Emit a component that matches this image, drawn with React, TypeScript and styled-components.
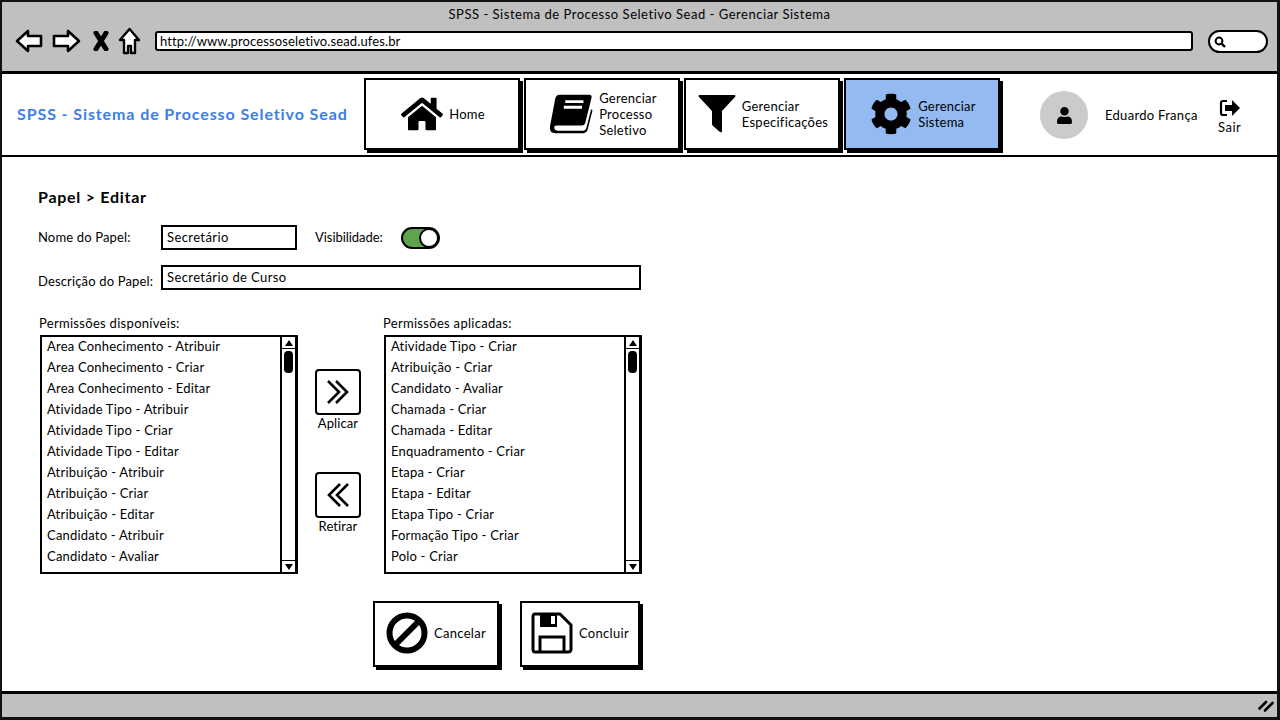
import React from 'react';
import styled, { createGlobalStyle } from 'styled-components';
import { FaHome, FaCog, FaUser } from 'react-icons/fa';

const available = [
    'Area Conhecimento - Atribuir',
    'Area Conhecimento - Criar',
    'Area Conhecimento - Editar',
    'Atividade Tipo - Atribuir',
    'Atividade Tipo - Criar',
    'Atividade Tipo - Editar',
    'Atribuição - Atribuir',
    'Atribuição - Criar',
    'Atribuição - Editar',
    'Candidato - Atribuir',
    'Candidato - Avaliar',
];

const applied = [
    'Atividade Tipo - Criar',
    'Atribuição - Criar',
    'Candidato - Avaliar',
    'Chamada - Criar',
    'Chamada - Editar',
    'Enquadramento - Criar',
    'Etapa - Criar',
    'Etapa - Editar',
    'Etapa Tipo - Criar',
    'Formação Tipo - Criar',
    'Polo - Criar',
];

const PermissionList = ({ title, items }: { title: string; items: string[] }) => (
    <ListColumn>
        <ListTitle>{title}</ListTitle>
        <ListBox>
            <ListItems>
                {items.map((item) => (
                    <ListItem key={item}>{item}</ListItem>
                ))}
            </ListItems>
            <ScrollBar>
                <ScrollArrow>
                    <svg width="8" height="6" viewBox="0 0 8 6">
                        <path d="M4 0 8 6H0z" fill="#000" />
                    </svg>
                </ScrollArrow>
                <ScrollThumb />
                <ScrollArrow $bottom>
                    <svg width="8" height="6" viewBox="0 0 8 6">
                        <path d="M0 0H8L4 6z" fill="#000" />
                    </svg>
                </ScrollArrow>
            </ScrollBar>
        </ListBox>
    </ListColumn>
);

const App = () => {
    return (
        <Window>
            <GlobalStyle />
            <BrowserBar>
                <BrowserTitle>SPSS - Sistema de Processo Seletivo Sead - Gerenciar Sistema</BrowserTitle>
                <BrowserRow>
                    <BrowserIcons>
                        <svg width="28" height="24" viewBox="0 0 28 24">
                            <path d="M2 12 13 2V7H26V17H13V22Z" fill="#fff" stroke="#000" strokeWidth="2.6" strokeLinejoin="round" />
                        </svg>
                        <svg width="29" height="24" viewBox="0 0 29 24">
                            <path d="M27 12 16 2V7H2V17H16V22Z" fill="#fff" stroke="#000" strokeWidth="2.6" strokeLinejoin="round" />
                        </svg>
                        <svg width="16" height="20" viewBox="0 0 16 20">
                            <path d="M3 2 13 18M13 2 3 18" stroke="#000" strokeWidth="5" strokeLinecap="round" />
                        </svg>
                        <svg width="23" height="28" viewBox="0 0 23 28">
                            <path d="M11.5 2 21 13H17V26H13V19H10V26H6V13H2Z" fill="#fff" stroke="#000" strokeWidth="2.4" strokeLinejoin="round" />
                        </svg>
                    </BrowserIcons>
                    <UrlBar>http://www.processoseletivo.sead.ufes.br</UrlBar>
                    <SearchBox>
                        <svg width="12" height="12" viewBox="0 0 12 12">
                            <circle cx="5" cy="5" r="3.4" fill="none" stroke="#000" strokeWidth="2" />
                            <path d="M7.5 7.5 11 11" stroke="#000" strokeWidth="2.4" />
                        </svg>
                    </SearchBox>
                </BrowserRow>
            </BrowserBar>

            <AppHeader>
                <Logo>SPSS - Sistema de Processo Seletivo Sead</Logo>
                <Nav>
                    <NavButton>
                        <FaHome size={42} />
                        <NavLabel>Home</NavLabel>
                    </NavButton>
                    <NavButton>
                        <svg width="44" height="42" viewBox="0 0 46 42">
                            <path d="M11 1H42Q45 1 44.500 4L38 30Q37.500 33 34 33H8Q5 33 5.500 36Q6 38.500 9 38.500H36Q38 38.500 39 36L44 16 45.500 17 40.500 37Q39.500 41 36 41H7Q0 41 1 34L6.500 5Q7.500 1 11 1Z" fill="#000" />
                            <path d="M17 8H36M15.500 14H34.500" stroke="#fff" strokeWidth="3" />
                        </svg>
                        <NavLabel>
                            Gerenciar
                            <br />
                            Processo
                            <br />
                            Seletivo
                        </NavLabel>
                    </NavButton>
                    <NavButton>
                        <svg width="38" height="38" viewBox="0 0 38 38">
                            <path d="M1 0H37Q38 1 37 2L24 16V36Q24 38 22 37L15 31Q14 30 14 29V16L1 2Q0 1 1 0Z" fill="#000" />
                        </svg>
                        <NavLabel>
                            Gerenciar
                            <br />
                            Especificações
                        </NavLabel>
                    </NavButton>
                    <NavButton $active>
                        <FaCog size={42} />
                        <NavLabel>
                            Gerenciar
                            <br />
                            Sistema
                        </NavLabel>
                    </NavButton>
                </Nav>
                <UserArea>
                    <Avatar>
                        <FaUser size={17} />
                    </Avatar>
                    <UserName>Eduardo França</UserName>
                    <Logout>
                        <svg width="22" height="18" viewBox="0 0 22 18">
                            <path d="M8 2H4Q2 2 2 4V14Q2 16 4 16H8" fill="none" stroke="#000" strokeWidth="2.2" />
                            <path d="M13 1 21 9 13 17V12H6V6H13Z" fill="#000" />
                        </svg>
                        <span>Sair</span>
                    </Logout>
                </UserArea>
            </AppHeader>

            <Content>
                <Heading>Papel &gt; Editar</Heading>
                <FormRow>
                    <FieldLabel>Nome do Papel:</FieldLabel>
                    <TextField $width={136}>Secretário</TextField>
                    <VisibilityLabel>Visibilidade:</VisibilityLabel>
                    <Toggle>
                        <ToggleKnob />
                    </Toggle>
                </FormRow>
                <FormRow>
                    <FieldLabel $low>Descrição do Papel:</FieldLabel>
                    <TextField $width={480}>Secretário de Curso</TextField>
                </FormRow>

                <TransferArea>
                    <PermissionList title="Permissões disponíveis:" items={available} />
                    <TransferButtons>
                        <TransferAction>
                            <TransferButton>
                                <svg width="26" height="26" viewBox="0 0 26 26">
                                    <path d="M3 2 14 13 3 24M11 2 22 13 11 24" fill="none" stroke="#000" strokeWidth="2.6" />
                                </svg>
                            </TransferButton>
                            <span>Aplicar</span>
                        </TransferAction>
                        <TransferAction>
                            <TransferButton>
                                <svg width="26" height="26" viewBox="0 0 26 26">
                                    <path d="M23 2 12 13 23 24M15 2 4 13 15 24" fill="none" stroke="#000" strokeWidth="2.6" />
                                </svg>
                            </TransferButton>
                            <span>Retirar</span>
                        </TransferAction>
                    </TransferButtons>
                    <PermissionList title="Permissões aplicadas:" items={applied} />
                </TransferArea>

                <Actions>
                    <ActionButton $width={126}>
                        <svg width="42" height="42" viewBox="0 0 42 42">
                            <circle cx="21" cy="21" r="17.500" fill="none" stroke="#000" strokeWidth="6" />
                            <path d="M9 33 33 9" stroke="#000" strokeWidth="6" />
                        </svg>
                        <span>Cancelar</span>
                    </ActionButton>
                    <ActionButton $width={120}>
                        <svg width="42" height="42" viewBox="0 0 42 42">
                            <path d="M4 2H29L40 13V37Q40 40 37 40H4Q2 40 2 37V5Q2 2 4 2Z" fill="#fff" stroke="#000" strokeWidth="3" strokeLinejoin="round" />
                            <path d="M9 2H26V15H9Z" fill="#000" />
                            <path d="M20 4H24V12H20Z" fill="#fff" />
                            <path d="M9 40V25H33V40" fill="none" stroke="#000" strokeWidth="3" />
                        </svg>
                        <span>Concluir</span>
                    </ActionButton>
                </Actions>
            </Content>

            <StatusBar>
                <svg width="16" height="12" viewBox="0 0 16 12">
                    <path d="M1.500 8.500 8 2M7 10.500 14.500 3" stroke="#000" strokeWidth="2.6" strokeLinecap="round" />
                </svg>
            </StatusBar>
        </Window>
    );
};

const GlobalStyle = createGlobalStyle`
    html, body {
        margin: 0;
        padding: 0;
        background: #fff;
    }
    * {
        box-sizing: border-box;
    }
`;

const Window = styled.div`
    width: 1280px;
    height: 720px;
    overflow: hidden;
    display: flex;
    flex-direction: column;
    border: 2px solid #111;
    border-bottom-width: 3px;
    border-right-width: 3px;
    background: #fff;
    color: #000;
    font-family: 'Lato', 'Noto Sans', sans-serif;
    font-size: 13px;
`;

const BrowserBar = styled.header`
    height: 72px;
    flex: none;
    background: #c0c0c0;
    border-bottom: 3px solid #000;
`;

const BrowserTitle = styled.div`
    height: 24px;
    padding-top: 4px;
    text-align: center;
    line-height: 16px;
    letter-spacing: 0.52px;
`;

const BrowserRow = styled.div`
    display: flex;
    align-items: center;
    height: 30px;
    padding-left: 13px;
`;

const BrowserIcons = styled.div`
    width: 140px;
    display: flex;
    align-items: center;
    gap: 9px;

    svg:nth-child(3) {
        margin-left: 3px;
    }
`;

const UrlBar = styled.div`
    width: 1038px;
    height: 20px;
    padding-left: 3px;
    line-height: 16px;
    background: #fff;
    border: 2px solid #000;
    border-radius: 3px;
    letter-spacing: 0.12px;
`;

const SearchBox = styled.div`
    width: 60px;
    height: 23px;
    margin-left: 15px;
    padding: 3px 0 0 4px;
    background: #fff;
    border: 2px solid #000;
    border-radius: 12px;
`;

const AppHeader = styled.div`
    height: 83px;
    flex: none;
    display: flex;
    padding-top: 4px;
    border-bottom: 2px solid #000;
`;

const Logo = styled.div`
    width: 362px;
    padding: 26px 0 0 15px;
    font-size: 16px;
    font-weight: 700;
    line-height: 20px;
    white-space: nowrap;
    color: #3b7ee6;
    letter-spacing: 0.9px;
`;

const Nav = styled.nav`
    display: flex;
    gap: 4px;
`;

const NavButton = styled.div<{ $active?: boolean }>`
    width: 156px;
    height: 72px;
    display: flex;
    align-items: center;
    justify-content: center;
    gap: 6px;
    padding-left: 2px;
    background: ${(p) => (p.$active ? '#93bbf1' : '#fff')};
    border: 2px solid #000;
    box-shadow: 3px 3px 0 #000;
`;

const NavLabel = styled.div`
    line-height: 16px;
    letter-spacing: 0.25px;
`;

const UserArea = styled.div`
    display: flex;
    align-items: center;
    height: 74px;
    padding-left: 40px;
`;

const Avatar = styled.div`
    width: 48px;
    height: 48px;
    display: flex;
    align-items: center;
    justify-content: center;
    border-radius: 50%;
    background: #cbcbcb;
`;

const UserName = styled.div`
    width: 113px;
    margin-left: 17px;
    letter-spacing: 0.3px;
`;

const Logout = styled.div`
    display: flex;
    flex-direction: column;
    align-items: center;
    gap: 2px;
    padding-top: 4px;
    line-height: 16px;
    letter-spacing: 0.5px;
`;

const Content = styled.main`
    flex: 1;
    padding: 31px 0 0 36px;
`;

const Heading = styled.h1`
    margin: 0 0 19px;
    font-size: 16px;
    font-weight: 700;
    line-height: 18px;
    letter-spacing: 0.73px;
`;

const FormRow = styled.div`
    display: flex;
    align-items: center;
    height: 25px;
    margin-bottom: 15px;
`;

const FieldLabel = styled.div<{ $low?: boolean }>`
    width: 123px;
    margin: ${(p) => (p.$low ? '6px 0 0' : '0 0 2px')};
    letter-spacing: 0.15px;
`;

const TextField = styled.div<{ $width: number }>`
    width: ${(p) => p.$width}px;
    height: 25px;
    padding: 2px 4px;
    line-height: 17px;
    border: 2px solid #000;
    letter-spacing: 0.4px;
`;

const VisibilityLabel = styled.div`
    width: 86px;
    margin: 0 0 2px 18px;
    letter-spacing: -0.05px;
`;

const Toggle = styled.div`
    width: 39px;
    height: 22px;
    display: flex;
    justify-content: flex-end;
    background: #5fa44d;
    border: 2px solid #000;
    border-radius: 11px;
`;

const ToggleKnob = styled.div`
    width: 20px;
    height: 20px;
    margin: -1px -1px 0 0;
    background: #fff;
    border: 2px solid #000;
    border-radius: 50%;
`;

const TransferArea = styled.section`
    display: flex;
    margin: 25px 0 0 1px;
`;

const ListColumn = styled.div`
    width: 258px;
`;

const ListTitle = styled.div`
    height: 20px;
    line-height: 16px;
    letter-spacing: 0.3px;
`;

const ListBox = styled.div`
    width: 258px;
    height: 239px;
    margin-left: 1px;
    display: flex;
    border: 2px solid #000;
    border-right-width: 3px;
`;

const ListItems = styled.ul`
    flex: 1;
    margin: 0;
    padding: 0 0 0 5px;
    list-style: none;
`;

const ListItem = styled.li`
    height: 21px;
    line-height: 19px;
    letter-spacing: 0.2px;
`;

const ScrollBar = styled.div`
    width: 15px;
    display: flex;
    flex-direction: column;
    align-items: center;
    border-left: 2px solid #000;
`;

const ScrollArrow = styled.div<{ $bottom?: boolean }>`
    width: 100%;
    height: 12px;
    display: flex;
    align-items: center;
    justify-content: center;
    margin-top: ${(p) => (p.$bottom ? 'auto' : '0')};
    border-bottom: ${(p) => (p.$bottom ? 'none' : '1px solid #000')};
    border-top: ${(p) => (p.$bottom ? '1px solid #000' : 'none')};
`;

const ScrollThumb = styled.div`
    width: 9px;
    height: 22px;
    margin-top: 2px;
    background: #000;
    border-radius: 4px;
`;

const TransferButtons = styled.div`
    width: 86px;
    display: flex;
    flex-direction: column;
    align-items: center;
    gap: 41px;
    padding: 54px 4px 0 0;
`;

const TransferAction = styled.div`
    display: flex;
    flex-direction: column;
    align-items: center;
    line-height: 16px;
    letter-spacing: 0.1px;
`;

const TransferButton = styled.div`
    width: 46px;
    height: 46px;
    display: flex;
    align-items: center;
    justify-content: center;
    border: 2px solid #000;
    border-radius: 4px;
`;

const Actions = styled.div`
    width: 602px;
    display: flex;
    justify-content: flex-end;
    gap: 21px;
    margin-top: 27px;
`;

const ActionButton = styled.div<{ $width: number }>`
    width: ${(p) => p.$width}px;
    height: 66px;
    display: flex;
    align-items: center;
    justify-content: center;
    gap: 6px;
    padding-bottom: 2px;
    border: 2px solid #000;
    box-shadow: 3px 3px 0 #000;
    letter-spacing: 0.3px;
`;

const StatusBar = styled.footer`
    height: 26px;
    flex: none;
    display: flex;
    align-items: center;
    justify-content: flex-end;
    padding-right: 3px;
    background: #c0c0c0;
    border-top: 3px solid #000;
`;

export default App;
